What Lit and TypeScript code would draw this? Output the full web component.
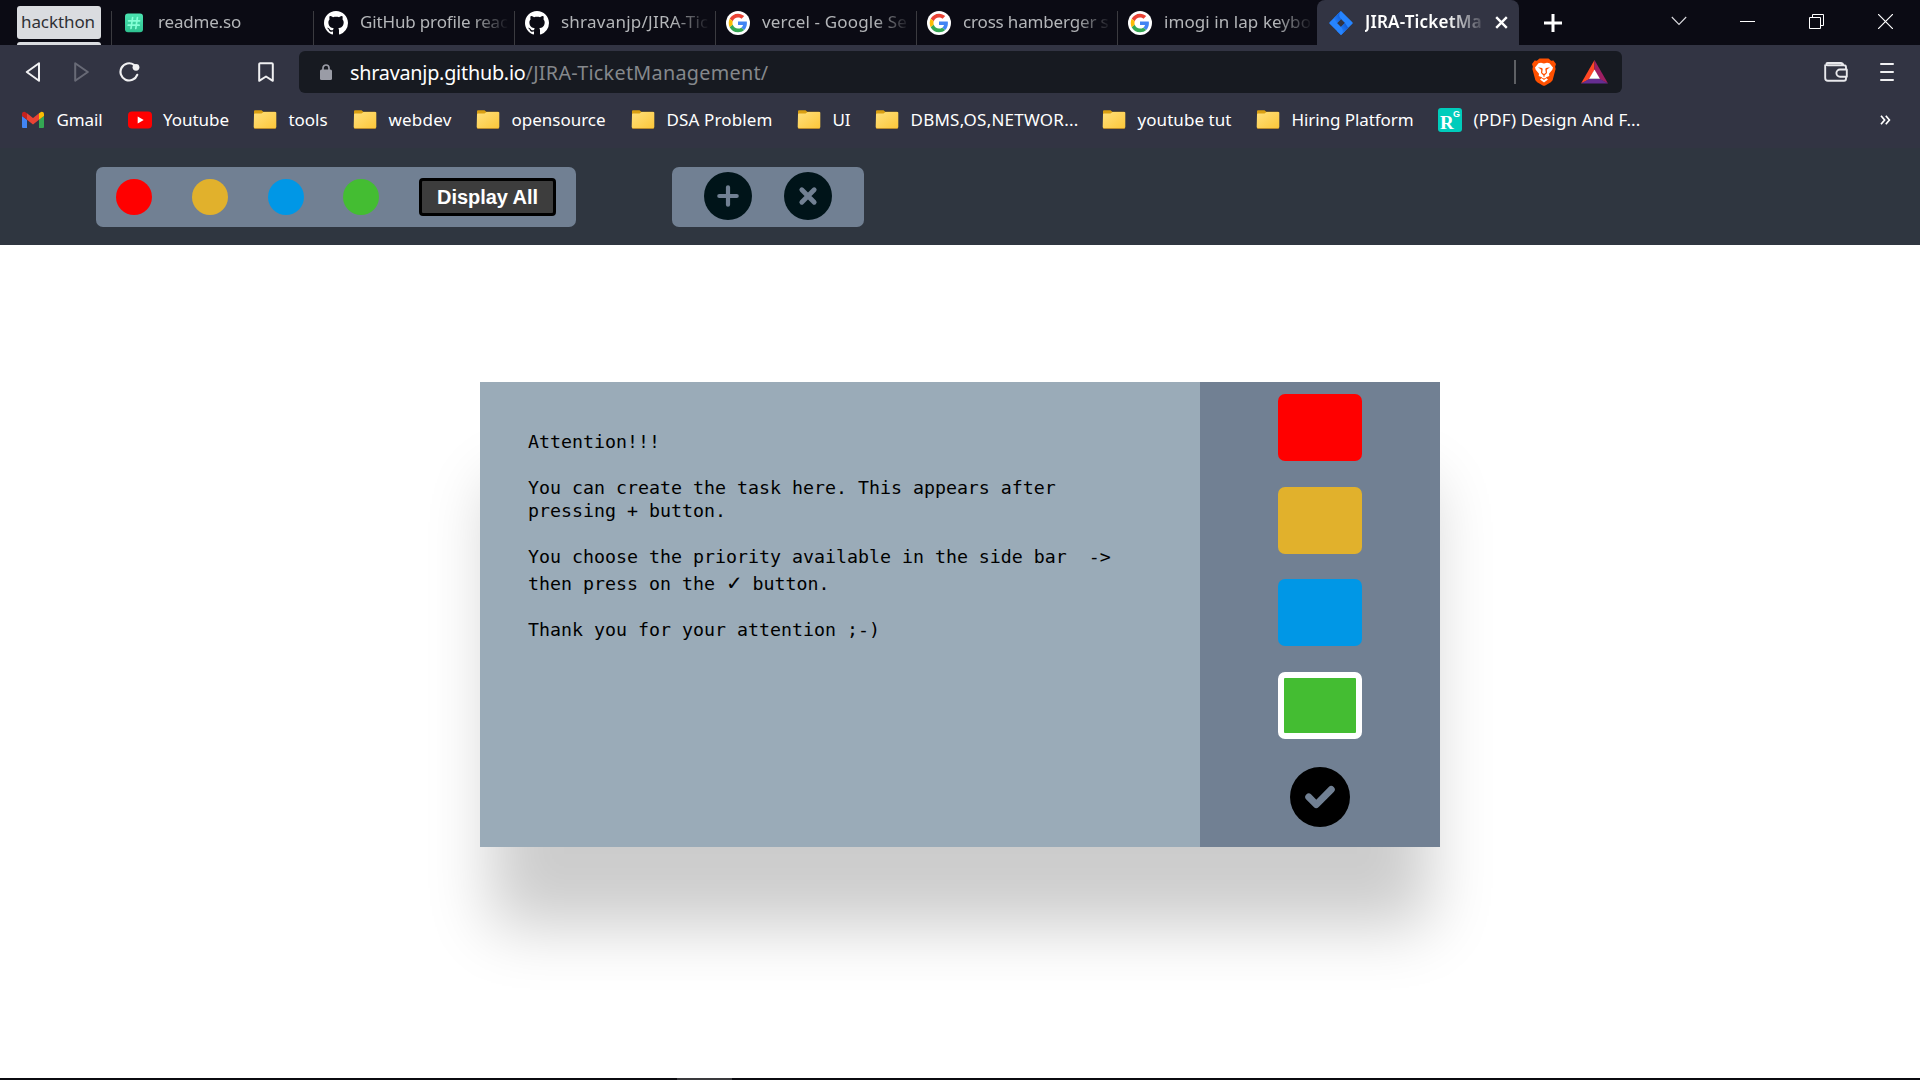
import { LitElement, html, css, svg } from "lit";
import { customElement } from "lit/decorators.js";
import { styleMap } from "lit/directives/style-map.js";
import { classMap } from "lit/directives/class-map.js";

const readmeIcon = html`<svg viewBox="0 0 24 24">
  <defs><linearGradient id="rd" x1="0" y1="0" x2="0" y2="1"><stop offset="0" stop-color="#4be3b0"/><stop offset="1" stop-color="#2fc391"/></linearGradient></defs>
  <rect x="3" y="2.6" width="18" height="18.6" rx="3" fill="url(#rd)"/>
  <path d="M10.6 6.5L9 17.5M15.4 6.5L13.8 17.5M6.6 9.8H17.6M6.2 14.2H17.2" stroke="#86ffd6" stroke-width="1.7" fill="none" stroke-linecap="round"/>
</svg>`;

const githubIcon = html`<svg viewBox="0 0 16 16"><path fill="#fff" d="M8 0C3.58 0 0 3.58 0 8c0 3.54 2.29 6.53 5.47 7.59.4.07.55-.17.55-.38 0-.19-.01-.82-.01-1.49-2.01.37-2.53-.49-2.69-.94-.09-.23-.48-.94-.82-1.13-.28-.15-.68-.52-.01-.53.63-.01 1.08.58 1.23.82.72 1.21 1.87.87 2.33.66.07-.52.28-.87.51-1.07-1.78-.2-3.64-.89-3.64-3.95 0-.87.31-1.59.82-2.15-.08-.2-.36-1.02.08-2.12 0 0 .67-.21 2.2.82.64-.18 1.32-.27 2-.27s1.36.09 2 .27c1.53-1.04 2.2-.82 2.2-.82.44 1.1.16 1.92.08 2.12.51.56.82 1.27.82 2.15 0 3.07-1.87 3.75-3.65 3.95.29.25.54.73.54 1.48 0 1.07-.01 1.93-.01 2.2 0 .21.15.46.55.38A8.01 8.01 0 0 0 16 8c0-4.42-3.58-8-8-8z"/></svg>`;

const googleIcon = html`<svg viewBox="0 0 24 24">
  <circle cx="12" cy="12" r="12" fill="#fff"/>
  <g transform="translate(2.7 2.7) scale(.3875)">
    <path fill="#EA4335" d="M24 9.5c3.54 0 6.71 1.22 9.21 3.6l6.85-6.85C35.9 2.38 30.47 0 24 0 14.62 0 6.51 5.38 2.56 13.22l7.98 6.19C12.43 13.72 17.74 9.5 24 9.5z"/>
    <path fill="#4285F4" d="M46.98 24.55c0-1.57-.15-3.09-.38-4.55H24v9.02h12.94c-.58 2.96-2.26 5.48-4.78 7.18l7.73 6c4.51-4.18 7.09-10.36 7.09-17.65z"/>
    <path fill="#FBBC05" d="M10.53 28.59c-.48-1.45-.76-2.99-.76-4.59s.27-3.14.76-4.59l-7.98-6.19C.92 16.46 0 20.12 0 24c0 3.88.92 7.54 2.56 10.78l7.97-6.19z"/>
    <path fill="#34A853" d="M24 48c6.48 0 11.93-2.13 15.89-5.81l-7.73-6c-2.15 1.45-4.92 2.3-8.16 2.3-6.26 0-11.57-4.22-13.47-9.91l-7.98 6.19C6.51 42.62 14.62 48 24 48z"/>
  </g>
</svg>`;

const jiraIcon = html`<svg viewBox="0 0 24 24">
  <defs>
    <linearGradient id="j1" x1="1" y1="0" x2="0" y2="1"><stop offset="0" stop-color="#0b52cc"/><stop offset="1" stop-color="#2684ff"/></linearGradient>
  </defs>
  <path fill="#2684ff" d="M12 0L23.4 11.2a1.2 1.2 0 0 1 0 1.6L12 24l-4-4 4-4 4-4-4-4-4-4z"/>
  <path fill="#2684ff" d="M12 0L.6 11.2a1.2 1.2 0 0 0 0 1.6L12 24l3.8-4-3.8-4-4-4 4-4z"/>
  <path fill="url(#j1)" d="M12 8c-2.4-2.5-2.4-5.5 0-8L6 6l-1.2 1.3L8 12z"/>
  <path fill="url(#j1)" d="M12 16c2.4 2.5 2.4 5.5 0 8l6-6 1.2-1.3L16 12z"/>
</svg>`;

const gmailIcon = html`<svg viewBox="0 0 24 24">
  <path fill="#4285f4" d="M1 20V8l5 3.7V20H2a1 1 0 0 1-1-1z"/>
  <path fill="#34a853" d="M18 20v-8.3L23 8v11a1 1 0 0 1-1 1z"/>
  <path fill="#ea4335" d="M6 11.8V5.3l6 4.6 6-4.6v6.5l-6 4.6z"/>
  <path fill="#c5221f" d="M1 8V6.2C1 4 3.3 3.2 4.8 4.4L6 5.3v6.5L1 8z"/>
  <path fill="#fbbc04" d="M18 11.8V5.3l1.2-.9C20.7 3.2 23 4 23 6.2V8z"/>
</svg>`;

const youtubeIcon = html`<svg viewBox="0 0 24 24"><rect x="0" y="3.5" width="24" height="17" rx="4" fill="#f00"/><path d="M9.7 8.5v7l6-3.5z" fill="#fff"/></svg>`;

const folderIcon = html`<svg viewBox="0 0 24 24">
  <defs><linearGradient id="fd" x1="0" y1="0" x2="1" y2="1"><stop offset="0" stop-color="#ffe07c"/><stop offset="1" stop-color="#fcc73a"/></linearGradient></defs>
  <path fill="#d99f12" d="M1 3.2a1 1 0 0 1 1-1h6.5l1.8 1.6H22a1 1 0 0 1 1 1V12H1z"/>
  <path fill="#b98a2c" d="M1 19.5h22v.4a1 1 0 0 1-1 1H2a1 1 0 0 1-1-1z"/>
  <path fill="url(#fd)" d="M1 6.5a1 1 0 0 1 1-1h6.5L10.5 4H22.5a.8.8 0 0 1 .8.8V19a1 1 0 0 1-1 1H1.7a1 1 0 0 1-1-1z"/>
</svg>`;

const rgIcon = html`<span class="rg"><b>R</b><i>G</i></span>`;

interface Tab { icon: unknown; label: string; w: number; span: number; active?: boolean; }
const tabs: Tab[] = [
  { icon: readmeIcon, label: "readme.so", w: 83, span: 202 },
  { icon: githubIcon, label: "GitHub profile reac", w: 148, span: 201 },
  { icon: githubIcon, label: "shravanjp/JIRA-Tic", w: 147.5, span: 201 },
  { icon: googleIcon, label: "vercel - Google Se", w: 145, span: 201 },
  { icon: googleIcon, label: "cross hamberger s", w: 145.5, span: 201 },
  { icon: googleIcon, label: "imogi in lap keybo", w: 147, span: 200 },
  { icon: jiraIcon, label: "JIRA-TicketMa", w: 117, span: 202, active: true },
];

/* span: distance to the next bookmark; w: label width */
const bookmarks = [
  { icon: gmailIcon, label: "Gmail", w: 46, span: 106.5 },
  { icon: youtubeIcon, label: "Youtube", w: 66, span: 125.5 },
  { icon: folderIcon, label: "tools", w: 39, span: 100 },
  { icon: folderIcon, label: "webdev", w: 63, span: 123 },
  { icon: folderIcon, label: "opensource", w: 94, span: 155 },
  { icon: folderIcon, label: "DSA Problem", w: 106, span: 166 },
  { icon: folderIcon, label: "UI", w: 18, span: 78 },
  { icon: folderIcon, label: "DBMS,OS,NETWOR...", w: 168, span: 227 },
  { icon: folderIcon, label: "youtube tut", w: 94, span: 154 },
  { icon: folderIcon, label: "Hiring Platform", w: 122, span: 182 },
  { icon: rgIcon, label: "(PDF) Design And F...", w: 167, span: 220 },
];

const priorities = ["red", "yellow", "blue", "green"];

const circled = (d: string, size: number, sw: number, fill: string) => html`
  <svg width=${size} height=${size} viewBox="0 0 48 48">
    <circle cx="24" cy="24" r="24" fill=${fill}/>
    ${svg`<path d=${d} fill="none" stroke="#718093" stroke-width=${sw} stroke-linecap="round" stroke-linejoin="round"/>`}
  </svg>`;

@customElement("app-root")
class AppRoot extends LitElement {
  static styles = css`
    :host { display: block; width: 1920px; height: 1080px; overflow: hidden; background: #fff; }
    * { box-sizing: border-box; }
    svg { display: block; flex: none; }
    .screen { display: flex; flex-direction: column; width: 1920px; height: 1080px; font-family: "Noto Sans", "Open Sans", sans-serif; }
    .fit { white-space: pre; flex: none; }

    .strip { display: flex; height: 45px; background: #0b0b14; flex: none; }
    .group { width: 111px; height: 45px; padding: 6px 0 0 17px; display: flex; flex-direction: column; gap: 3px; }
    .chip { width: 84px; height: 33px; flex: none; border-radius: 3px; background: #dadce0; color: #2f3035; font-size: 17px; line-height: 32px; padding-left: 4px; }
    .chipline { width: 84px; height: 3px; flex: none; border-radius: 3px 3px 0 0; background: #dadce0; }
    .tab { position: relative; display: flex; align-items: center; gap: 12px; padding: 0 0 0 11px; color: #b4b6b9; font-size: 17px; flex: none; }
    .tab::before { content: ""; position: absolute; left: 0; top: 11px; bottom: 0; width: 1px; background: #3b3b40; }
    .tab svg { width: 24px; height: 24px; }
    .title { width: 149px; line-height: 30px; display: flex; flex: none; margin-top: -1px; -webkit-mask-image: linear-gradient(90deg, #000 112px, transparent 149px); mask-image: linear-gradient(90deg, #000 112px, transparent 149px); }
    .active { background: #323443; color: #fff; font-weight: 600; border-radius: 8px 8px 0 0; padding-left: 12px; }
    .active::before { display: none; }
    .active .title { width: 118px; -webkit-mask-image: linear-gradient(90deg, #000 82px, transparent 122px); mask-image: linear-gradient(90deg, #000 82px, transparent 122px); }
    .tab .close { width: 13px; height: 13px; }
    .controls { display: flex; flex: 1; align-items: center; }
    .newtab { margin-left: 25px; width: 18px; }
    .caret { margin: -4px 0 0 109px; }
    .min { margin: -3px 0 0 53px; }
    .max { margin: -3px 0 0 54px; }
    .cls { margin: -3px 0 0 54px; }

    .nav { display: flex; align-items: center; height: 54px; padding: 0 26px 0 25px; background: #323443; flex: none; }
    .fwd { margin-left: 33px; }
    .reload { margin-left: 29px; }
    .mark { margin-left: 118px; }
    .url { display: flex; align-items: center; margin-left: 25px; width: 1323px; height: 42px; background: #171a21; border-radius: 6px; font-size: 19.8px; color: #fff; padding: 0 14px 0 21px; }
    .host { margin-left: 18px; }
    .path { color: #85888c; }
    .vr { margin-left: auto; width: 2px; height: 24px; background: #5e6064; }
    .brave { margin-left: 16px; }
    .bat { margin-left: 25px; }
    .wallet { margin-left: 202px; }
    .burger { margin-left: 32px; }

    .marks { display: flex; align-items: center; height: 49px; padding: 0 29px 7px 21px; background: #323443; color: #fff; font-size: 17px; flex: none; }
    .bm { display: flex; align-items: center; gap: 12px; flex: none; }
    .bm .fit { margin: -2px 0 0 -0.5px; }
    .bm svg { width: 24px; height: 24px; }
    .more { margin: -1px 0 0 auto; }
    .rg { display: flex; width: 24px; height: 24px; flex: none; background: #00ccbb; border-radius: 3px; color: #fff; padding-left: 2px; }
    .rg b { font: bold 19px/29px "Liberation Serif", serif; width: 13px; }
    .rg i { font: normal bold 9px/13px "Liberation Sans", sans-serif; }

    .header { display: flex; gap: 96px; height: 97px; padding: 19px 96px 0; background: #2f3640; flex: none; }
    .panel { display: flex; align-items: center; height: 60px; border-radius: 7px; background: #718093; }
    .filters { width: 480px; justify-content: space-between; padding: 0 20px; }
    .actions { width: 192px; gap: 32px; justify-content: center; padding-bottom: 2px; }
    .dot { width: 36px; height: 36px; border-radius: 50%; }
    .all { width: 137px; height: 38px; padding: 0; border: 3px solid #000; border-radius: 4px; background: #3d3d3d; color: #fff; font: bold 20px/32px "Liberation Sans", Arial, sans-serif; text-align: center; }
    .red { background: #f00; }
    .yellow { background: #e1b12c; }
    .blue { background: #0097e6; }
    .green { background: #44bd32; }

    .main { flex: 1; display: flex; justify-content: center; align-items: flex-start; padding-top: 137px; overflow: hidden; }
    .modal { display: flex; width: 960px; height: 465px; box-shadow: rgba(0, 0, 0, .2) 0 90px 60px -10.5px; }
    .note { width: 720px; padding: 48px; background: #9aabb8; color: #000; font: 18.27px/23px "DejaVu Sans Mono", monospace; }
    .line { height: 23px; white-space: pre; }
    .tall { height: 27px; padding-top: 4px; display: flex; }
    .tick { width: 15.5px; font: bold 20px/23px "DejaVu Sans", sans-serif; }
    .side { width: 240px; display: flex; flex-direction: column; align-items: center; background: #718093; padding-top: 12px; }
    .prio { width: 84px; height: 67.3px; margin-bottom: 25.3px; border-radius: 7px; flex: none; }
    .picked { border: 6px solid #fff; }
    .ok { margin-top: 2.4px; }

    .task { display: flex; height: 2px; background: #0b0b10; flex: none; padding-left: 677px; }
    .task-on { width: 55px; background: #3a3a3e; }
  `;

  /* Spread each label's letters so that it fills its own width. */
  firstUpdated() {
    this.renderRoot.querySelectorAll<HTMLElement>("[data-w]").forEach((el) => {
      const want = Number(el.dataset.w);
      const have = el.getBoundingClientRect().width;
      const n = (el.textContent ?? "").length;
      el.style.letterSpacing = `${(want - have) / n}px`;
    });
  }

  render() {
    return html`<div class="screen">
      <div class="strip">
        <div class="group"><div class="chip"><span class="fit" data-w="74">hackthon</span></div><div class="chipline"></div></div>
        ${tabs.map((t) => html`<div class=${classMap({ tab: true, active: !!t.active })} style=${styleMap({ width: `${t.span}px` })}>
          ${t.icon}<div class="title"><span class="fit" data-w=${t.w}>${t.label}</span></div>
          ${t.active ? html`<svg class="close" viewBox="0 0 13 13"><path d="M1.2 1.2l10.6 10.6M11.8 1.2L1.2 11.8" stroke="#fff" stroke-width="2.4"/></svg>` : ""}
        </div>`)}
        <div class="controls">
          <svg class="newtab" width="18" height="18" viewBox="0 0 18 18"><path d="M9 0v18M0 9h18" stroke="#fff" stroke-width="3"/></svg>
          <svg class="caret" width="16" height="10" viewBox="0 0 16 10"><path d="M.8 1L8 8.5 15.2 1" fill="none" stroke="#dcdce0" stroke-width="1.1"/></svg>
          <svg class="min" width="15" height="15" viewBox="0 0 15 15"><path d="M0 7.5h15" stroke="#fff"/></svg>
          <svg class="max" width="15" height="15" viewBox="0 0 15 15"><path d="M.5 3.5h11v11H.5zM3.5 3.5v-3h11v11h-3" fill="none" stroke="#fff"/></svg>
          <svg class="cls" width="15" height="15" viewBox="0 0 15 15"><path d="M0 0l15 15M15 0L0 15" stroke="#fff" stroke-width="1.2"/></svg>
        </div>
      </div>

      <div class="nav">
        <svg width="16" height="20" viewBox="0 0 16 20"><path d="M14 1.2L1.8 10 14 18.8z" fill="none" stroke="#f0f0f2" stroke-width="2" stroke-linejoin="round"/></svg>
        <svg class="fwd" width="16" height="20" viewBox="0 0 16 20"><path d="M1.2 1.2L13.8 10 1.2 18.8z" fill="none" stroke="#686a76" stroke-width="2" stroke-linejoin="round"/></svg>
        <svg class="reload" width="21" height="20" viewBox="0 0 21 20"><path d="M15 2.8A8.6 8.6 0 1 0 18.2 12.8" fill="none" stroke="#f0f0f2" stroke-width="2.2" stroke-linecap="round"/><circle cx="17" cy="5.3" r="3.4" fill="#f0f0f2"/></svg>
        <svg class="mark" width="16" height="20" viewBox="0 0 16 20"><path d="M1.2 2.2a1 1 0 0 1 1-1h11.6a1 1 0 0 1 1 1V18.8L8 14.5l-6.8 4.3z" fill="none" stroke="#f0f0f2" stroke-width="2" stroke-linejoin="round"/></svg>
        <div class="url">
          <svg width="12" height="16" viewBox="0 0 12 16"><rect y="5.500" width="12" height="10.500" rx="1.500" fill="#9a9ca6"/><path d="M3 6V4a3 3 0 0 1 6 0v2" fill="none" stroke="#9a9ca6" stroke-width="1.700"/></svg>
          <span class="fit host" data-w="175.5">shravanjp.github.io</span><span class="fit path" data-w="243">/JIRA-TicketManagement/</span>
          <div class="vr"></div>
          <svg class="brave" width="24" height="28" viewBox="0 0 24 28">
            <path fill="#ff5000" d="M7.500.5h9l2.600 2.300 2.300-.3L24 6l-.9 2.800.5 2.200-3 11.200-1.800 2L12.800 27.700h-1.600L5.200 24.200l-1.800-2L.4 11l.5-2.200L0 6l2.600-3.500 2.300.3z"/>
            <path fill="#fff" d="M12 5.500l3-.7 2.500.4L21 9.500l-.7 2.300-3.300 4 .3 2.200-2.500 1-1 .8L16 21.500l-4 3-4-3 2.200-1.700-1-.8-2.500-1 .3-2.200-3.300-4L3 9.500l3.500-4.300L9 4.800z"/>
            <path fill="#ff5000" d="M6 9.300l4 .8.700.9-.5 3.700L12 16l1.800-1.300-.5-3.700.7-.9 4-.8-3.200 2.400.2 3.300-2.500 2.500v1.300l-.5.300-.5-.3v-1.300L9 15l.2-3.300zM8.500 19.300L12 20.500l3.500-1.200L12 22z"/>
          </svg>
          <svg class="bat" width="27" height="24" viewBox="0 0 27 24"><path fill="#ff4724" d="M13.500 0L0 23.500l8.500-4.300L13.500 10z"/><path fill="#9e1f63" d="M13.500 0L27 23.500l-8.500-4.300L13.500 10z"/><path fill="#662d91" d="M0 23.500h27l-8.500-4.800h-10z"/><path fill="#fff" d="M13.500 9.500l5.400 9.300H8.100z"/></svg>
        </div>
        <svg class="wallet" width="24" height="20" viewBox="0 0 24 20"><path d="M22 6.500V5.200a2 2 0 0 0-2-2H3.500a1 1 0 0 1 0-2.200H17a3 3 0 0 1 2.500 2M1.200 2.500V16a2.800 2.800 0 0 0 2.800 2.800H20a2 2 0 0 0 2-2v-1.300M22.800 7.500v7.200H16a3.600 3.600 0 0 1 0-7.200z" fill="none" stroke="#e8e8ec" stroke-width="1.900" stroke-linejoin="round"/></svg>
        <svg class="burger" width="14" height="20" viewBox="0 0 14 20"><path d="M1 2h12M1 10h12M1 18h12" stroke="#f0f0f2" stroke-width="2" stroke-linecap="round"/></svg>
      </div>

      <div class="marks">
        ${bookmarks.map((b) => html`<div class="bm" style=${styleMap({ width: `${b.span}px` })}>${b.icon}<span class="fit" data-w=${b.w}>${b.label}</span></div>`)}
        <svg class="more" width="11" height="10" viewBox="0 0 11 10"><path d="M1 .8L4.600 5 1 9.200M5.800 .8L9.400 5 5.800 9.200" fill="none" stroke="#fff" stroke-width="1.700"/></svg>
      </div>

      <div class="header">
        <div class="panel filters">
          ${priorities.map((p) => html`<div class="dot ${p}"></div>`)}
          <button class="all"><span class="fit" data-w="101">Display All</span></button>
        </div>
        <div class="panel actions">
          ${circled("M24 15.300v17.400M15.300 24h17.400", 48, 4.2, "#001419")}
          ${circled("M17.800 17.800l12.400 12.400M30.200 17.800L17.800 30.200", 48, 4.8, "#001419")}
        </div>
      </div>

      <div class="main">
        <div class="modal">
          <div class="note">
            <div class="line">Attention!!!</div>
            <div class="line"></div>
            <div class="line">You can create the task here. This appears after</div>
            <div class="line">pressing + button.</div>
            <div class="line"></div>
            <div class="line">You choose the priority available in the side bar  -&gt;</div>
            <div class="line tall"><span>then press on the </span><span class="tick">✓</span><span> button.</span></div>
            <div class="line"></div>
            <div class="line">Thank you for your attention ;-)</div>
          </div>
          <div class="side">
            ${priorities.map((p) => html`<div class="prio ${p} ${p === "green" ? "picked" : ""}"></div>`)}
            <div class="ok">${circled("M15 24l6 6.100L33 18", 60, 5.6, "#000")}</div>
          </div>
        </div>
      </div>
      <div class="task"><div class="task-on"></div></div>
    </div>`;
  }
}
